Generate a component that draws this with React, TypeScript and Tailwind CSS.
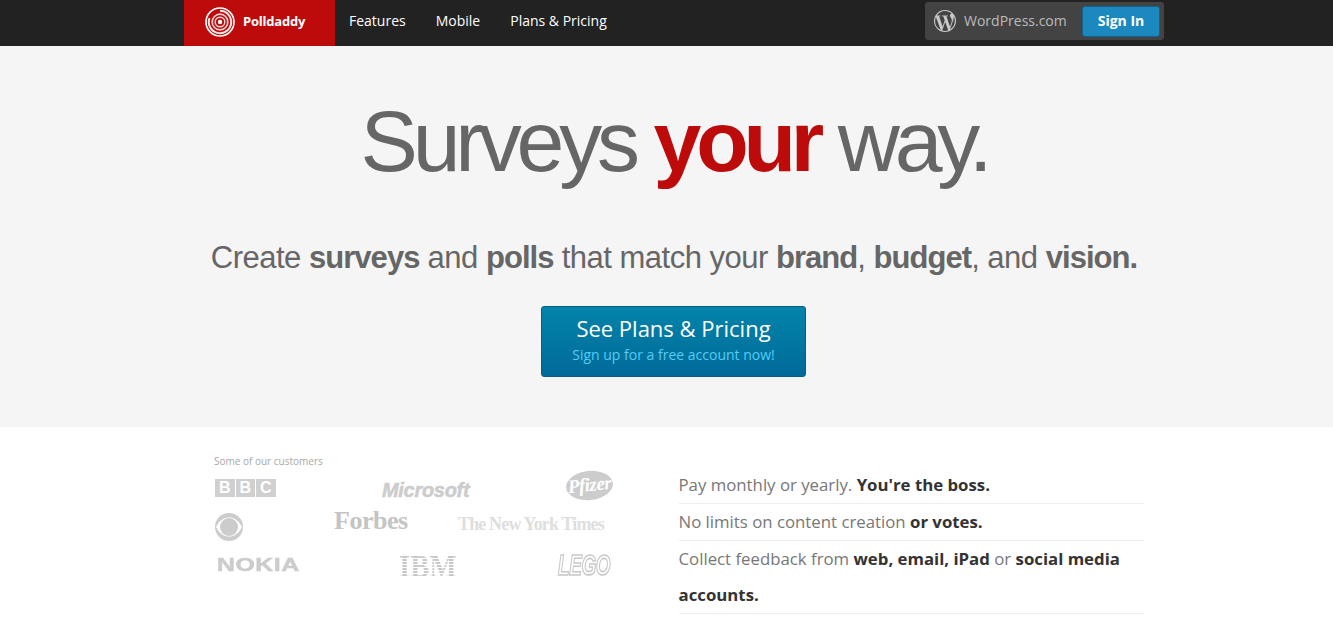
import type { ReactNode } from 'react'

function SpiralLogo() {
  return (
    <svg width="30" height="30" viewBox="0 0 30 30" fill="none" stroke="#fff">
      <circle cx="15" cy="15" r="14" strokeWidth="1.6" />
      <path d="M15 3.800a11.200 11.200 0 1 1-10.500 7.300" strokeWidth="2" opacity=".9" />
      <circle cx="15" cy="15" r="7.800" strokeWidth="1.700" opacity=".8" />
      <circle cx="15" cy="15" r="4.800" strokeWidth="1.400" opacity=".85" />
      <circle cx="15" cy="15" r="2.200" fill="#fff" stroke="none" />
    </svg>
  )
}

function WpLogo() {
  return (
    <svg width="22" height="22" viewBox="0 0 24 24" fill="#c9c9c9">
      <path d="M12 0a12 12 0 1 0 0 24 12 12 0 0 0 0-24zM1.200 12c0-1.600.3-3 .9-4.400l5.200 14.200A10.800 10.800 0 0 1 1.200 12zm10.800 10.800c-1.100 0-2.100-.2-3-.4l3.200-9.400 3.300 9.100.1.1c-1.100.4-2.300.6-3.600.6zm1.500-15.900c.6 0 1.200-.1 1.200-.1.6-.1.5-.9-.1-.9 0 0-1.700.1-2.800.1-1 0-2.700-.1-2.700-.1-.6 0-.7.9-.1.9 0 0 .5.1 1.100.1l1.600 4.400-2.300 6.800-3.800-11.200c.6 0 1.200-.1 1.200-.1.6-.1.5-.9-.1-.9 0 0-1.700.1-2.800.1h-.7A10.800 10.800 0 0 1 12 1.200c2.800 0 5.400 1.100 7.300 2.800h-.1c-1 0-1.800.9-1.800 1.900 0 .9.5 1.600 1.100 2.500.4.700.9 1.700.9 3 0 .9-.3 2-.8 3.500l-1.100 3.500-3.900-11.500zm3.900 14.500 3.300-9.500c.6-1.500.8-2.800.8-3.900 0-.4 0-.8-.1-1.100.8 1.500 1.300 3.300 1.300 5.100 0 4-2.100 7.500-5.300 9.400z" />
    </svg>
  )
}

function Point({ children }: { children: ReactNode }) {
  return <li className="border-b border-[#eeeeee] leading-[36px]">{children}</li>
}

export default function App() {
  return (
    <div className="h-[618px] overflow-hidden bg-white font-['Open_Sans',sans-serif]">
      {/* top bar */}
      <header className="h-[46px] bg-[#222222]">
        <div className="ml-[184px] flex h-full w-[980px] items-stretch">
          <a className="flex w-[151px] items-center gap-[8px] bg-[#bd0b0b] pb-[2px] pl-[21px] text-[13px] font-bold tracking-[-0.2px] text-white">
            <SpiralLogo />
            <span>Polldaddy</span>
          </a>
          <nav className="ml-[14px] flex items-center gap-[30px] pb-[6px] text-[14px] text-white">
            <a>Features</a>
            <a>Mobile</a>
            <a>Plans &amp; Pricing</a>
          </nav>
          <div className="ml-auto mt-[2px] flex h-[38px] w-[239px] items-center rounded-[3px] bg-[#434343] pl-[9px] pr-[4px]">
            <WpLogo />
            <span className="ml-[8px] pb-[2px] text-[14px] text-[#bbbbbb]">WordPress.com</span>
            <button className="ml-auto h-[31px] w-[78px] rounded-[3px] border border-[#14618f] bg-[#1c88c0] pb-[2px] text-[14px] font-bold text-white">
              Sign In
            </button>
          </div>
        </div>
      </header>

      {/* hero */}
      <section className="h-[381px] bg-[#f5f5f5] font-['Liberation_Sans',sans-serif] text-[#666666]">
        <div className="ml-[184px] flex w-[980px] flex-col items-center">
          <h1 className="mt-[43px] text-[86px] leading-[104px] tracking-[-5.2px]">
            Surveys <strong className="text-[#bd0b0b]">your</strong> way.
          </h1>
          <p className="mt-[45px] text-[31px] leading-[40px] tracking-[-0.5px] [&_strong]:tracking-[-0.95px]">
            Create <strong>surveys</strong> and <strong>polls</strong> that match your <strong>brand</strong>, <strong>budget</strong>, and <strong>vision.</strong>
          </p>
          <a className="mr-[1px] mt-[28px] flex h-[71px] w-[265px] flex-col items-center rounded-[3px] border border-[#055f85] bg-gradient-to-b from-[#0384aa] to-[#016a99] pt-[6px] font-['Open_Sans',sans-serif]">
            <span className="text-[22px] leading-[31px] text-white">See Plans &amp; Pricing</span>
            <span className="text-[14px] leading-[21px] text-[#55ccf5]">Sign up for a free account now!</span>
          </a>
        </div>
      </section>

      {/* customers + selling points */}
      <section className="ml-[215px] flex w-[930px] pt-[28px]">
        <div className="w-[463.5px] whitespace-nowrap text-[#cccccc]">
          <p className="-ml-[1px] text-[10px] leading-[12px] text-[#a8a8a8]">Some of our customers</p>
          <div className="mt-[4px] grid h-[39px] grid-cols-[167px_184px_auto] items-start">
            <div className="mt-[8px] flex gap-[1px]">
              {['B', 'B', 'C'].map((l, i) => (
                <span key={i} className="flex h-[18px] w-[19.5px] items-center justify-center bg-[#d0d0d0] font-['Liberation_Sans',sans-serif] text-[16px] font-bold text-white">
                  {l}
                </span>
              ))}
            </div>
            <span className="mt-[9px] font-['Liberation_Sans',sans-serif] text-[20px] font-bold italic leading-[20px] tracking-[-0.3px] [-webkit-text-stroke:0.5px_#cccccc]">Microsoft</span>
            <span className="flex h-[29px] w-[47px] -rotate-6 items-center justify-center rounded-[50%] bg-[#cccccc] font-['Liberation_Serif',serif] text-[19px] font-bold italic tracking-[-0.5px] text-white">Pfizer</span>
          </div>
          <div className="grid h-[43px] grid-cols-[119px_124px_auto] items-start">
            <svg className="mt-[3px]" width="28" height="28" viewBox="0 0 28 28">
              <circle cx="14" cy="14" r="14" fill="#cccccc" />
              <path d="M1 14C5 6.500 9.500 4.500 14 4.500S23 6.500 27 14c-4 7.500-8.500 9.500-13 9.500S5 21.500 1 14z" fill="#fff" />
              <circle cx="14" cy="14" r="9" fill="#cccccc" />
            </svg>
            <span className="mt-[-2px] font-['Liberation_Serif',serif] text-[26px] font-bold leading-[26px] tracking-[-0.5px] text-[#c4c4c4]">Forbes</span>
            <span className="mt-[3px] font-['Liberation_Serif',serif] text-[18px] font-bold leading-[22px] tracking-[-0.85px] text-[#dedede]">The New York Times</span>
          </div>
          <div className="grid grid-cols-[182px_159px_auto] items-start pl-[2px]">
            <span className="mt-[2px] origin-left scale-x-[1.38] font-['Liberation_Sans',sans-serif] text-[18px] font-bold leading-[20px] tracking-[0.4px] [-webkit-text-stroke:0.5px_#cccccc]">NOKIA</span>
            <span className="origin-left scale-x-[0.9] bg-[repeating-linear-gradient(to_bottom,#c8c8c8_0,#c8c8c8_2px,transparent_2px,transparent_3px)] bg-clip-text font-['Liberation_Serif',serif] text-[32px] font-bold leading-[26px] text-transparent">IBM</span>
            <span className="origin-center scale-y-[1.6] font-['Liberation_Sans',sans-serif] text-[19px] font-bold italic leading-[24px] tracking-[-0.4px] text-transparent [-webkit-text-stroke:1px_#c8c8c8]">LEGO</span>
          </div>
        </div>
        <ul className="mt-[12px] w-[465px] text-[16.8px] text-[#777777] [&_strong]:text-[#333333]">
          <Point>Pay monthly or yearly. <strong>You're the boss.</strong></Point>
          <Point>No limits on content creation <strong>or votes.</strong></Point>
          <Point>Collect feedback from <strong>web, email, iPad</strong> or <strong>social media</strong> <strong>accounts.</strong></Point>
        </ul>
      </section>
    </div>
  )
}
